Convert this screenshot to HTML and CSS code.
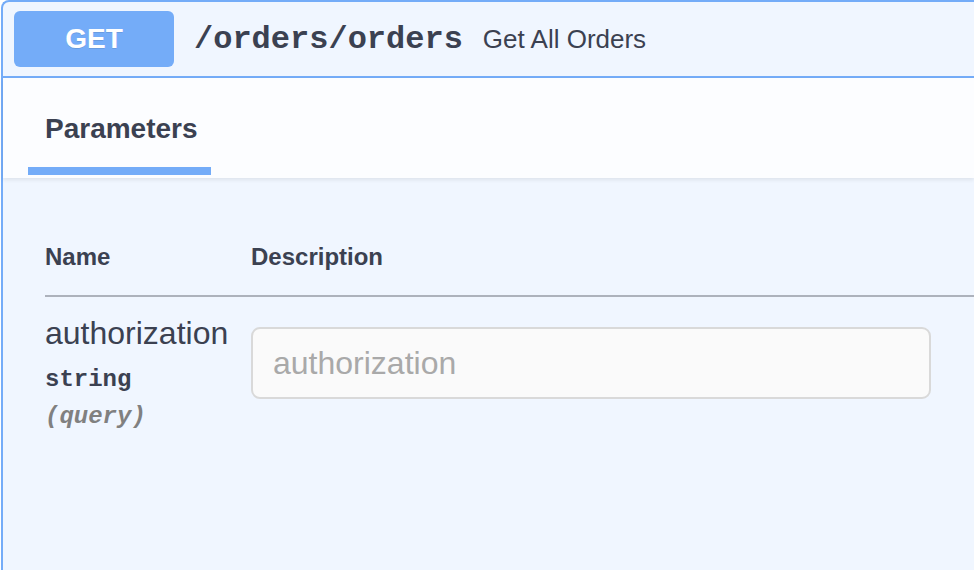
FILE: index.html
```html
<!DOCTYPE html>
<html lang="en">
<head>
<meta charset="utf-8">
<title>GET /orders/orders</title>
<link rel="stylesheet" href="styles.css">
</head>
<body>
<div class="opblock">
  <div class="summary">
    <span class="method">GET</span>
    <span class="path">/orders/orders</span>
    <span class="summary-desc">Get All Orders</span>
  </div>
  <div class="section-header">
    <div class="tab">
      <h4 class="tab-title">Parameters</h4>
      <div class="tab-underline"></div>
    </div>
  </div>
  <div class="table-container">
    <div class="params-head">
      <div class="col-name">Name</div>
      <div class="col-desc">Description</div>
    </div>
    <div class="params-row">
      <div class="col-name">
        <div class="param-name">authorization</div>
        <div class="param-type">string</div>
        <div class="param-in">(query)</div>
      </div>
      <div class="col-desc">
        <input class="param-input" type="text" placeholder="authorization">
      </div>
    </div>
  </div>
</div>
</body>
</html>
```

FILE: styles.css
```css
html, body {
  margin: 0;
  padding: 0;
  background: #ffffff;
  overflow: hidden;
}

body {
  font-family: "Liberation Sans", Arial, sans-serif;
  color: #3b4151;
}

.opblock {
  box-sizing: border-box;
  margin-left: 1px;
  height: 570px;
  border: 2px solid #74acf8;
  border-right: 0;
  border-bottom: 0;
  border-top-left-radius: 8px;
  background: #f0f6ff;
}

.summary {
  display: flex;
  align-items: center;
  height: 74px;
  padding-left: 11px;
  border-bottom: 2px solid #74acf8;
}

.method {
  display: flex;
  align-items: center;
  justify-content: center;
  width: 160px;
  height: 56px;
  border-radius: 6px;
  background: #74acf8;
  color: #ffffff;
  font-size: 28px;
  font-weight: bold;
  text-shadow: 0 1px 0 rgba(0, 0, 0, 0.1);
}

.path {
  padding: 0 20px;
  font-family: "Liberation Mono", "Courier New", monospace;
  font-size: 32px;
  font-weight: bold;
  color: #3b4151;
}

.summary-desc {
  font-size: 26px;
  color: #3b4151;
}

.section-header {
  height: 100px;
  box-sizing: border-box;
  padding: 35px 42px 3px;
  background: rgba(255, 255, 255, 0.8);
  box-shadow: 0 2px 4px rgba(0, 0, 0, 0.08);
}

.tab-title {
  margin: 0;
  font-size: 28px;
  line-height: 32px;
  font-weight: bold;
  color: #3b4151;
}

.tab-underline {
  margin-top: 22px;
  margin-left: -17px;
  width: 183px;
  height: 8px;
  background: #74acf8;
}

.table-container {
  padding: 40px 0 0 42px;
}

.params-head {
  display: flex;
  padding: 25px 0 24px;
  border-bottom: 2px solid #adb2bc;
  font-size: 24px;
  line-height: 28px;
  font-weight: bold;
  color: #3b4151;
}

.col-name {
  width: 206px;
  flex: none;
}

.col-desc {
  flex: 1;
}

.params-row {
  display: flex;
  padding-top: 18px;
}

.param-name {
  font-size: 32px;
  color: #3b4151;
}

.param-type {
  margin-top: 14px;
  font-family: "Liberation Mono", "Courier New", monospace;
  font-size: 24px;
  font-weight: bold;
  color: #3b4151;
}

.param-in {
  margin-top: 10px;
  font-family: "Liberation Mono", "Courier New", monospace;
  font-size: 24px;
  font-weight: bold;
  font-style: italic;
  color: #808080;
}

.param-input {
  display: block;
  box-sizing: border-box;
  margin-top: 12px;
  width: 680px;
  height: 72px;
  padding: 0 20px;
  border: 2px solid #d9d9d9;
  border-radius: 9px;
  background: #fafafa;
  font-family: "Liberation Sans", Arial, sans-serif;
  font-size: 32px;
  color: #3b4151;
  outline: none;
}

.param-input::placeholder {
  color: #a9a9a9;
}
```
